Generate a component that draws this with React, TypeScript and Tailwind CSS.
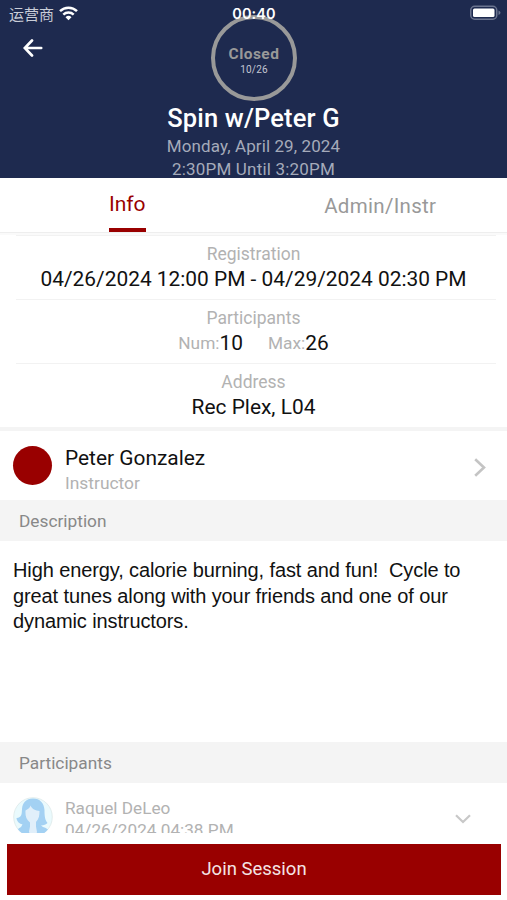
import type { ReactNode } from 'react';

interface InfoRowProps {
  label: string;
  children: ReactNode;
}

function StatusBar() {
  return (
    <div className="flex h-7 items-center pl-[9px] pr-[6px]">
      <div className="flex flex-1 items-center gap-[5px]">
        <span className="font-['Noto_Sans_CJK_SC',sans-serif] text-[15px] leading-[26px] text-[#c9cdd8]">运营商</span>
        <svg className="-mt-[2px] h-[15px] w-[19px]" viewBox="0 0 19 15" fill="none" stroke="white">
          <path strokeWidth="2.5" d="M1 5.2a12.2 12.2 0 0 1 17 0" />
          <path strokeWidth="2.4" d="M4.3 8.7a7.4 7.4 0 0 1 10.4 0" />
          <path fill="white" stroke="none" d="M6.5 11.2a4.4 4.4 0 0 1 6 0L9.5 14.3z" />
        </svg>
      </div>
      <span className="relative z-10 -ml-[2px] font-['Inter',sans-serif] text-[14.5px] font-semibold tracking-[0.1px] text-white">
        00:40
      </span>
      <div className="flex flex-1 justify-end">
        <svg className="-mt-[2px] h-[16px] w-[31px]" viewBox="0 0 31 16">
          <rect x="0.75" y="1.25" width="26" height="13" rx="4" fill="none" stroke="#6b748f" strokeWidth="1.5" />
          <rect x="3" y="3.5" width="21.5" height="8.5" rx="1.5" fill="white" />
          <path d="M28.5 5.5v4.5q2-.8 2-2.2t-2-2.3z" fill="#6b748f" />
        </svg>
      </div>
    </div>
  );
}

function Header() {
  return (
    <header className="h-[178px] overflow-hidden bg-[#1e2a4f] text-center">
      <StatusBar />
      <div className="-mt-[13px] flex h-[86px] items-start">
        <div className="w-[211px] pl-[23px] pt-[24px] text-left">
          <svg className="h-[18px] w-[20px]" viewBox="0 0 20 18" fill="none" stroke="white" strokeWidth="2.7">
            <path strokeLinecap="round" d="M9 1.5L1.8 9L9 16.5M2 9h16.2" />
          </svg>
        </div>
        <div className="flex h-[86px] w-[86px] flex-col items-center rounded-full border-4 border-[#999999] pt-[26px]">
          <span className="text-[15.5px] font-bold leading-[18px] tracking-[0.45px] text-[#999999]">Closed</span>
          <span className="text-[10px] leading-[13px] tracking-[0.2px] text-[#c3c7d2]">10/26</span>
        </div>
      </div>
      <h1 className="mt-[2px] text-[25.5px] font-medium leading-[31px] tracking-[0.15px] text-white">Spin w/Peter G</h1>
      <p className="mt-px text-[17px] leading-[23px] tracking-[0.1px] text-[#a5aaba]">Monday, April 29, 2024</p>
      <p className="text-[17px] leading-[23px] tracking-[0.2px] text-[#a5aaba]">2:30PM Until 3:20PM</p>
    </header>
  );
}

function Tabs() {
  return (
    <nav className="flex h-[54px]">
      <div className="flex flex-1 justify-center">
        <div className="ml-px h-full border-b-4 border-[#990000] text-[21px] leading-[52px] text-[#990000]">Info</div>
      </div>
      <div className="flex-1 text-center text-[20.5px] leading-[56px] tracking-[0.3px] text-[#999999]">Admin/Instr</div>
    </nav>
  );
}

function InfoRow({ label, children }: InfoRowProps) {
  return (
    <div className="ml-[16px] h-[64px] w-[480px] border-t border-[#f2f2f2] pr-[5px] pt-[7px] text-center">
      <p className="text-[17.5px] leading-[22px] text-[#b2b2b2]">{label}</p>
      <div className="whitespace-nowrap text-[20.9px] leading-[28px] text-[#111111]">{children}</div>
    </div>
  );
}

function SectionTitle({ children }: { children: ReactNode }) {
  return (
    <h2 className="h-[41px] bg-[#f4f4f4] pl-[19px] text-[17.3px] leading-[42px] text-[#888888]">{children}</h2>
  );
}

function Avatar() {
  return (
    <svg className="h-[40px] w-[40px] shrink-0" viewBox="0 0 40 40">
      <defs>
        <clipPath id="avatar">
          <circle cx="20" cy="20" r="19.5" />
        </clipPath>
      </defs>
      <circle cx="20" cy="20" r="19.3" fill="#eafafd" stroke="#dde9e8" strokeWidth="0.8" />
      <g clipPath="url(#avatar)">
        {/* hair and shoulders */}
        <path
          fill="#a3d1f3"
          d="M20 1.500C13 1.500 9.500 6 9 12c-.3 5 0 8.500-5.500 9 .5 4 3 5.500 6 6.500L8 30c-3 1.500-5 3.500-6 6v4h35v-5c-1-2.500-4-4-7-5l-2-1.500c3 0 5-1 6.500-2.500-2.500-3-3-7-3-13C31 6 27 1.500 20 1.500z"
        />
        {/* face and neck */}
        <path
          fill="#e1effa"
          d="M17.500 8.500c-.5 2-2 3.500-5 5-.3 5 .5 9 4.500 12v4l-1 5 1.500 5.500h5l1.500-5-1-5.500v-4.500c3-3 3.500-7 3.500-11-4-.5-7.500-2-9-5.500z"
        />
      </g>
    </svg>
  );
}

export default function App() {
  return (
    <div className="flex h-[900px] w-[507px] flex-col overflow-hidden bg-white font-['Roboto',sans-serif]">
      <Header />
      <Tabs />
      <div className="h-[3px] border-t border-[#eeeeee] bg-[#fafafa]" />

      <InfoRow label="Registration">04/26/2024 12:00 PM - 04/29/2024 02:30 PM</InfoRow>
      <InfoRow label="Participants">
        <div className="flex items-start justify-center">
          <span className="text-[17.3px] leading-[28px] text-[#b2b2b2]">Num:</span>
          <span>10</span>
          <span className="ml-[25px] text-[17.3px] leading-[28px] text-[#b2b2b2]">Max:</span>
          <span>26</span>
        </div>
      </InfoRow>
      <InfoRow label="Address">Rec Plex, L04</InfoRow>
      <div className="h-[4px] shrink-0 bg-[#f4f4f4]" />

      {/* Instructor */}
      <div className="flex h-[69px] shrink-0 pl-[13px] pr-[21px]">
        <div className="mt-[15px] h-[39px] w-[39px] rounded-full bg-[#990000]" />
        <div className="ml-[13px] flex-1 pt-[14px]">
          <p className="text-[20.9px] leading-[27px] text-[#111111]">Peter Gonzalez</p>
          <p className="text-[17.4px] leading-[23px] text-[#b2b2b2]">Instructor</p>
        </div>
        <svg className="mt-[27px] h-[19px] w-[12px]" viewBox="0 0 12 19" fill="none" stroke="#c4c4c4" strokeWidth="2.6">
          <path d="M1.200 1.200L10 9.500L1.200 17.800" />
        </svg>
      </div>

      <SectionTitle>Description</SectionTitle>
      <p className="h-[201px] shrink-0 whitespace-pre pl-[13px] pt-[17px] font-['Liberation_Sans',sans-serif] text-[20px] leading-[25.7px] tracking-[-0.11px] text-[#111111]">
        {'High energy, calorie burning, fast and fun!  Cycle to\ngreat tunes along with your friends and one of our\ndynamic instructors.'}
      </p>

      <SectionTitle>Participants</SectionTitle>
      <div className="flex h-[50px] shrink-0 overflow-hidden pl-[13px] pr-[36px] pt-[14px]">
        <Avatar />
        <div className="ml-[12px] flex-1 text-[17.2px] leading-[22px] text-[#b2b2b2]">
          <p>Raquel DeLeo</p>
          <p>04/26/2024 04:38 PM</p>
        </div>
        <svg className="mt-[17px] h-[10px] w-[16px]" viewBox="0 0 16 10" fill="none" stroke="#c8c8c8" strokeWidth="2.200">
          <path d="M1 1.200L8 8L15 1.200" />
        </svg>
      </div>

      <button className="ml-[7px] mt-[11px] h-[51px] w-[494px] shrink-0 bg-[#990000] text-[18.5px] text-[#f4e4e4]">
        Join Session
      </button>
    </div>
  );
}
